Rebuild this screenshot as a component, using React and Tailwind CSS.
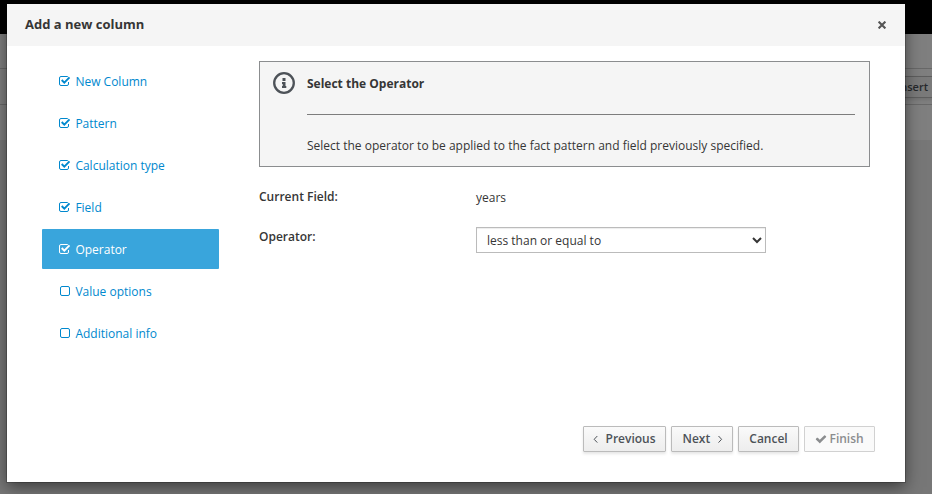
import React from "react";

const CHECK =
  "M1671 566q0 40-28 68l-724 724-136 136q-28 28-68 28t-68-28l-136-136-362-362q-28-28-28-68t28-68l136-136q28-28 68-28t68 28l294 295 656-657q28-28 68-28t68 28l136 136q28 28 28 68z";

const steps = [
  { label: "New Column", done: true },
  { label: "Pattern", done: true },
  { label: "Calculation type", done: true },
  { label: "Field", done: true },
  { label: "Operator", done: true, active: true },
  { label: "Value options", done: false },
  { label: "Additional info", done: false },
];

function StepBox({ done }) {
  return (
    <svg viewBox="0 0 12 12" className="h-3 w-3 shrink-0" fill="none" stroke="currentColor">
      {done ? (
        <>
          <path d="M9.5 7v2a1.5 1.5 0 0 1-1.5 1.5H2A1.5 1.5 0 0 1 .5 9V3A1.5 1.5 0 0 1 2 1.5h6q.7 0 1.1.3" />
          <path d="M2.7 5l2.6 2.6 5.2-5.2" strokeWidth="1.9" />
        </>
      ) : (
        <rect x="1.5" y="1.5" width="9" height="9" rx="1.5" />
      )}
    </svg>
  );
}

function Angle({ d }) {
  return (
    <svg viewBox="0 0 5 8" className="h-2 w-[5px] shrink-0" fill="none" stroke="currentColor" strokeWidth="1">
      <path d={d} />
    </svg>
  );
}

function Button({ className, disabled, children }) {
  const look = disabled
    ? "border-[#d1d1d1] bg-[#fafafa] text-[#8b8d8f]"
    : "border-[#bbb] bg-linear-to-b from-[#fafafa] to-[#ededed] text-[#4d5258] shadow-[0_2px_3px_rgba(3,3,3,0.1)]";
  return (
    <button
      disabled={disabled}
      className={`flex h-[26px] items-center rounded-[1px] border pb-px text-[12px] leading-5 font-semibold ${look} ${className}`}
    >
      {children}
    </button>
  );
}

function Backdrop() {
  return (
    <div className="flex h-full flex-col bg-[#777]">
      <div className="h-[34px] bg-black" />
      <div className="h-[35px] border-b border-[#686868] bg-[#7f7f7f]" />
      <div className="flex h-9 items-start justify-end border-b border-[#686868] bg-[#7f7f7f] pt-[7px]">
        <div className="-mr-px flex h-[22px] w-[42px] items-center justify-end border border-[#5e5e5e] bg-[#7a7a7a] pr-1 text-[11px] font-semibold text-[#27292c] shadow-[0_2px_3px_rgba(3,3,3,0.1)]">
          Insert
        </div>
      </div>
      <div className="h-[35px] bg-[#7f7f7f]" />
    </div>
  );
}

export default function App() {
  return (
    <div className="relative h-[494px] w-[932px] overflow-hidden font-['Open_Sans','Noto_Sans',sans-serif] text-[12px] leading-5 text-[#363636]">
      <Backdrop />
      <div className="absolute top-1 left-[7px] flex h-[478px] w-[898px] flex-col bg-white shadow-[0_0_0_1px_rgba(0,0,0,0.2),0_5px_15px_rgba(0,0,0,0.5)]">
        <header className="flex h-[42px] shrink-0 items-center justify-between bg-[#f5f5f5] pr-[19px] pl-[18px]">
          <h4 className="pb-0.5 text-[13px] font-bold">Add a new column</h4>
          <svg viewBox="0 0 8 8" className="h-2 w-2" fill="none" stroke="#555" strokeWidth="2.1">
            <path d="M.6.6l6.8 6.8M7.4.6L.6 7.4" />
          </svg>
        </header>
        <div className="flex flex-1 pl-[35px]">
          <nav className="flex w-[177px] flex-col gap-0.5 pt-[15px]">
            {steps.map((s) => (
              <a
                key={s.label}
                className={`flex h-10 items-center rounded-[1px] pl-[17px] ${s.active ? "bg-[#39a5dc] text-white" : "text-[#0088ce]"}`}
              >
                <StepBox done={s.done} />
                <span className="mt-0.5 ml-[4.4px]">{s.label}</span>
              </a>
            ))}
          </nav>
          <main className="ml-10 flex w-[616px] flex-col pt-[15px]">
            <section className="flex h-[106px] w-[611px] border border-[#8b8d8f] bg-[#f5f5f5] pr-[14px] pl-[13px]">
              <svg viewBox="0 0 22 22" className="mt-[10px] h-[22px] w-[22px] shrink-0" fill="#4d5258">
                <circle cx="11" cy="11" r="9.8" fill="none" stroke="#4d5258" strokeWidth="2.3" />
                <path d="M9.5 6h3v3h-3zM9 10h3.5v4h.8v2H9v-2h.7v-2H9z" />
              </svg>
              <div className="ml-3 flex-1">
                <h5 className="flex h-[53px] items-start border-b border-[#7d7d7d] pt-3 font-bold">Select the Operator</h5>
                <p className="pt-[21px]">Select the operator to be applied to the fact pattern and field previously specified.</p>
              </div>
            </section>
            <div className="mt-5 flex h-10">
              <label className="w-[217px] font-semibold">Current Field:</label>
              <span className="pt-px">years</span>
            </div>
            <div className="flex">
              <label className="w-[217px] font-semibold">Operator:</label>
              <select className="h-[26px] w-[290px] border border-[#bbb] bg-white pl-[6px] text-[12px] text-[#363636] shadow-[inset_0_1px_1px_rgba(3,3,3,0.075)]">
                <option>less than or equal to</option>
              </select>
            </div>
            <footer className="mt-auto mb-[30px] flex justify-end gap-[5px]">
              <Button className="w-[83px] pl-[9px]">
                <Angle d="M4.3 1L1.2 4.3l3.1 3.3" />
                <span className="ml-[7.5px]">Previous</span>
              </Button>
              <Button className="w-[62px] pl-[10.5px]">
                <span className="mr-2">Next</span>
                <Angle d="M.5 1l3.1 3.3L.5 7.6" />
              </Button>
              <Button className="w-[61px] justify-center">Cancel</Button>
              <Button className="w-[71px] pl-[10px]" disabled>
                <svg viewBox="0 0 1792 1792" fill="currentColor" className="h-3 w-3 shrink-0">
                  <path d={CHECK} />
                </svg>
                <span className="ml-[2.5px]">Finish</span>
              </Button>
            </footer>
          </main>
        </div>
      </div>
    </div>
  );
}
